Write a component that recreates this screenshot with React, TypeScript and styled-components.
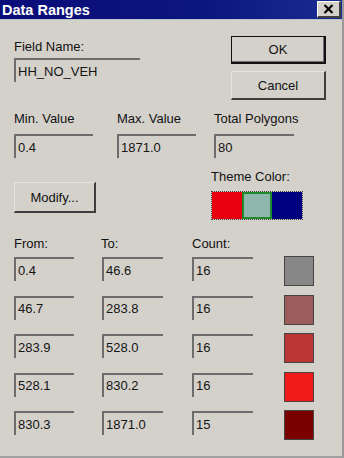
import React from "react";
import styled, { createGlobalStyle } from "styled-components";

const Global = createGlobalStyle`
  html, body { margin: 0; padding: 0; background: #d4d1cb; }
  body { font-family: "Liberation Sans", Arial, sans-serif; }
  * { box-sizing: border-box; }
`;

const Win = styled.div`
  width: 344px;
  height: 458px;
  background: #d4d1cb;
  border-right: 2px solid #9a9a9a;
  border-bottom: 2px solid #a0a0a0;
  display: flex;
  flex-direction: column;
  color: #111;
  font-size: 13px;
  overflow: hidden;
`;

const TitleBar = styled.div`
  height: 20px;
  flex: none;
  background: linear-gradient(90deg, #0a0c78 0%, #0c1680 60%, #1a2c92 100%);
  display: flex;
  align-items: center;
  padding: 0 1px 0 2px;
  border-bottom: 1px solid #b9c4c8;
`;

const Title = styled.div`
  color: #fff;
  font-weight: bold;
  font-size: 14.5px;
  letter-spacing: 0px;
  flex: 1;
`;

const CloseBtn = styled.div`
  width: 24px;
  height: 17px;
  margin-top: -1px;
  background: #d4d1cb;
  border-top: 1px solid #fff;
  border-left: 1px solid #fff;
  border-right: 2px solid #404040;
  border-bottom: 2px solid #404040;
  display: flex;
  align-items: center;
  justify-content: center;
`;

const Body = styled.div`
  display: flex;
  flex-direction: column;
  padding: 0 16px 0 14px;
`;

const RowA = styled.div`
  display: flex;
  justify-content: space-between;
  margin-top: 16px;
`;

const Col = styled.div<{ $pt?: number }>`
  display: flex;
  flex-direction: column;
  padding-top: ${(p) => p.$pt ?? 0}px;
`;

const Label = styled.div`
  line-height: 15px;
  height: 15px;
  white-space: nowrap;
`;

const Field = styled.div<{ $w: number; $mt?: number }>`
  width: ${(p) => p.$w}px;
  height: 24px;
  margin-top: ${(p) => p.$mt ?? 0}px;
  border-top: 2px solid #6c6c6c;
  border-left: 2px solid #6c6c6c;
  padding-left: 2px;
  display: flex;
  align-items: center;
  line-height: 15px;
  color: #151515;
`;

const Button = styled.div<{ $w: number; $h: number; $default?: boolean; $mt?: number }>`
  width: ${(p) => p.$w}px;
  height: ${(p) => p.$h}px;
  margin-top: ${(p) => p.$mt ?? 0}px;
  background: #d4d1cb;
  display: flex;
  align-items: center;
  justify-content: center;
  border-top: 1px solid ${(p) => (p.$default ? "#111" : "#e6e4df")};
  border-left: 1px solid ${(p) => (p.$default ? "#111" : "#e6e4df")};
  border-right: 2px solid ${(p) => (p.$default ? "#111" : "#3e3e3e")};
  border-bottom: 2px solid ${(p) => (p.$default ? "#111" : "#3e3e3e")};
  box-shadow: ${(p) => (p.$default ? "inset -1px -1px 0 #707070" : "none")};
  font-size: 13px;
`;

const RowB = styled.div`
  display: grid;
  grid-template-columns: 103px 97px 80px;
  margin-top: 11px;
`;

const RowC = styled.div`
  display: flex;
  margin-top: 11px;
`;

const ThemeCol = styled.div`
  display: flex;
  flex-direction: column;
  margin-left: 115px;
`;

const Swatches = styled.div`
  display: flex;
  margin-top: 7px;
  height: 29px;
  border: 1px dotted #404040;
`;

const ThemeSwatch = styled.div<{ $c: string; $sel?: boolean }>`
  width: 30px;
  height: 100%;
  background: ${(p) => p.$c};
  border: ${(p) => (p.$sel ? "2px solid #1e8a2a" : "none")};
`;

const Ranges = styled.div`
  display: grid;
  grid-template-columns: 88px 90px 92px 30px;
  grid-auto-rows: 24px;
  row-gap: 14.5px;
  margin-top: 6px;
`;

const RangeLabels = styled.div`
  display: grid;
  grid-template-columns: 87px 91px 92px;
  margin-top: 16px;
`;

const ColorBox = styled.div<{ $c: string }>`
  width: 30px;
  height: 30px;
  margin-top: -1px;
  background: ${(p) => p.$c};
  border: 1px solid #444;
`;

const rows = [
  { from: "0.4", to: "46.6", count: "16", color: "#878787" },
  { from: "46.7", to: "283.8", count: "16", color: "#9c5c5c" },
  { from: "283.9", to: "528.0", count: "16", color: "#bb3636" },
  { from: "528.1", to: "830.2", count: "16", color: "#f01a1a" },
  { from: "830.3", to: "1871.0", count: "15", color: "#7a0000" },
];

export default function App() {
  return (
    <>
      <Global />
      <Win>
        <TitleBar>
          <Title>Data Ranges</Title>
          <CloseBtn>
            <svg width="11" height="10" viewBox="0 0 11 10">
              <path d="M1.5 1 L9.5 9 M9.5 1 L1.5 9" stroke="#000" strokeWidth="2.2" />
            </svg>
          </CloseBtn>
        </TitleBar>
        <Body>
          <RowA>
            <Col $pt={3}>
              <Label>Field Name:</Label>
              <Field $w={126} $mt={4}>HH_NO_VEH</Field>
            </Col>
            <Col>
              <Button $w={95} $h={28} $default>OK</Button>
              <Button $w={95} $h={29} $mt={7}>Cancel</Button>
            </Col>
          </RowA>
          <RowB>
            <Col>
              <Label>Min. Value</Label>
              <Field $w={79} $mt={8}>0.4</Field>
            </Col>
            <Col>
              <Label>Max. Value</Label>
              <Field $w={79} $mt={8}>1871.0</Field>
            </Col>
            <Col>
              <Label>Total Polygons</Label>
              <Field $w={80} $mt={8}>80</Field>
            </Col>
          </RowB>
          <RowC>
            <Button $w={82} $h={31} $mt={13}>Modify...</Button>
            <ThemeCol>
              <Label>Theme Color:</Label>
              <Swatches>
                <ThemeSwatch $c="#e8000e" />
                <ThemeSwatch $c="#8fb7ae" $sel />
                <ThemeSwatch $c="#000080" />
              </Swatches>
            </ThemeCol>
          </RowC>
          <RangeLabels>
            <Label>From:</Label>
            <Label>To:</Label>
            <Label>Count:</Label>
          </RangeLabels>
          <Ranges>
            {rows.map((r) => (
              <React.Fragment key={r.from}>
                <Field $w={60}>{r.from}</Field>
                <Field $w={61}>{r.to}</Field>
                <Field $w={61}>{r.count}</Field>
                <ColorBox $c={r.color} />
              </React.Fragment>
            ))}
          </Ranges>
        </Body>
      </Win>
    </>
  );
}
